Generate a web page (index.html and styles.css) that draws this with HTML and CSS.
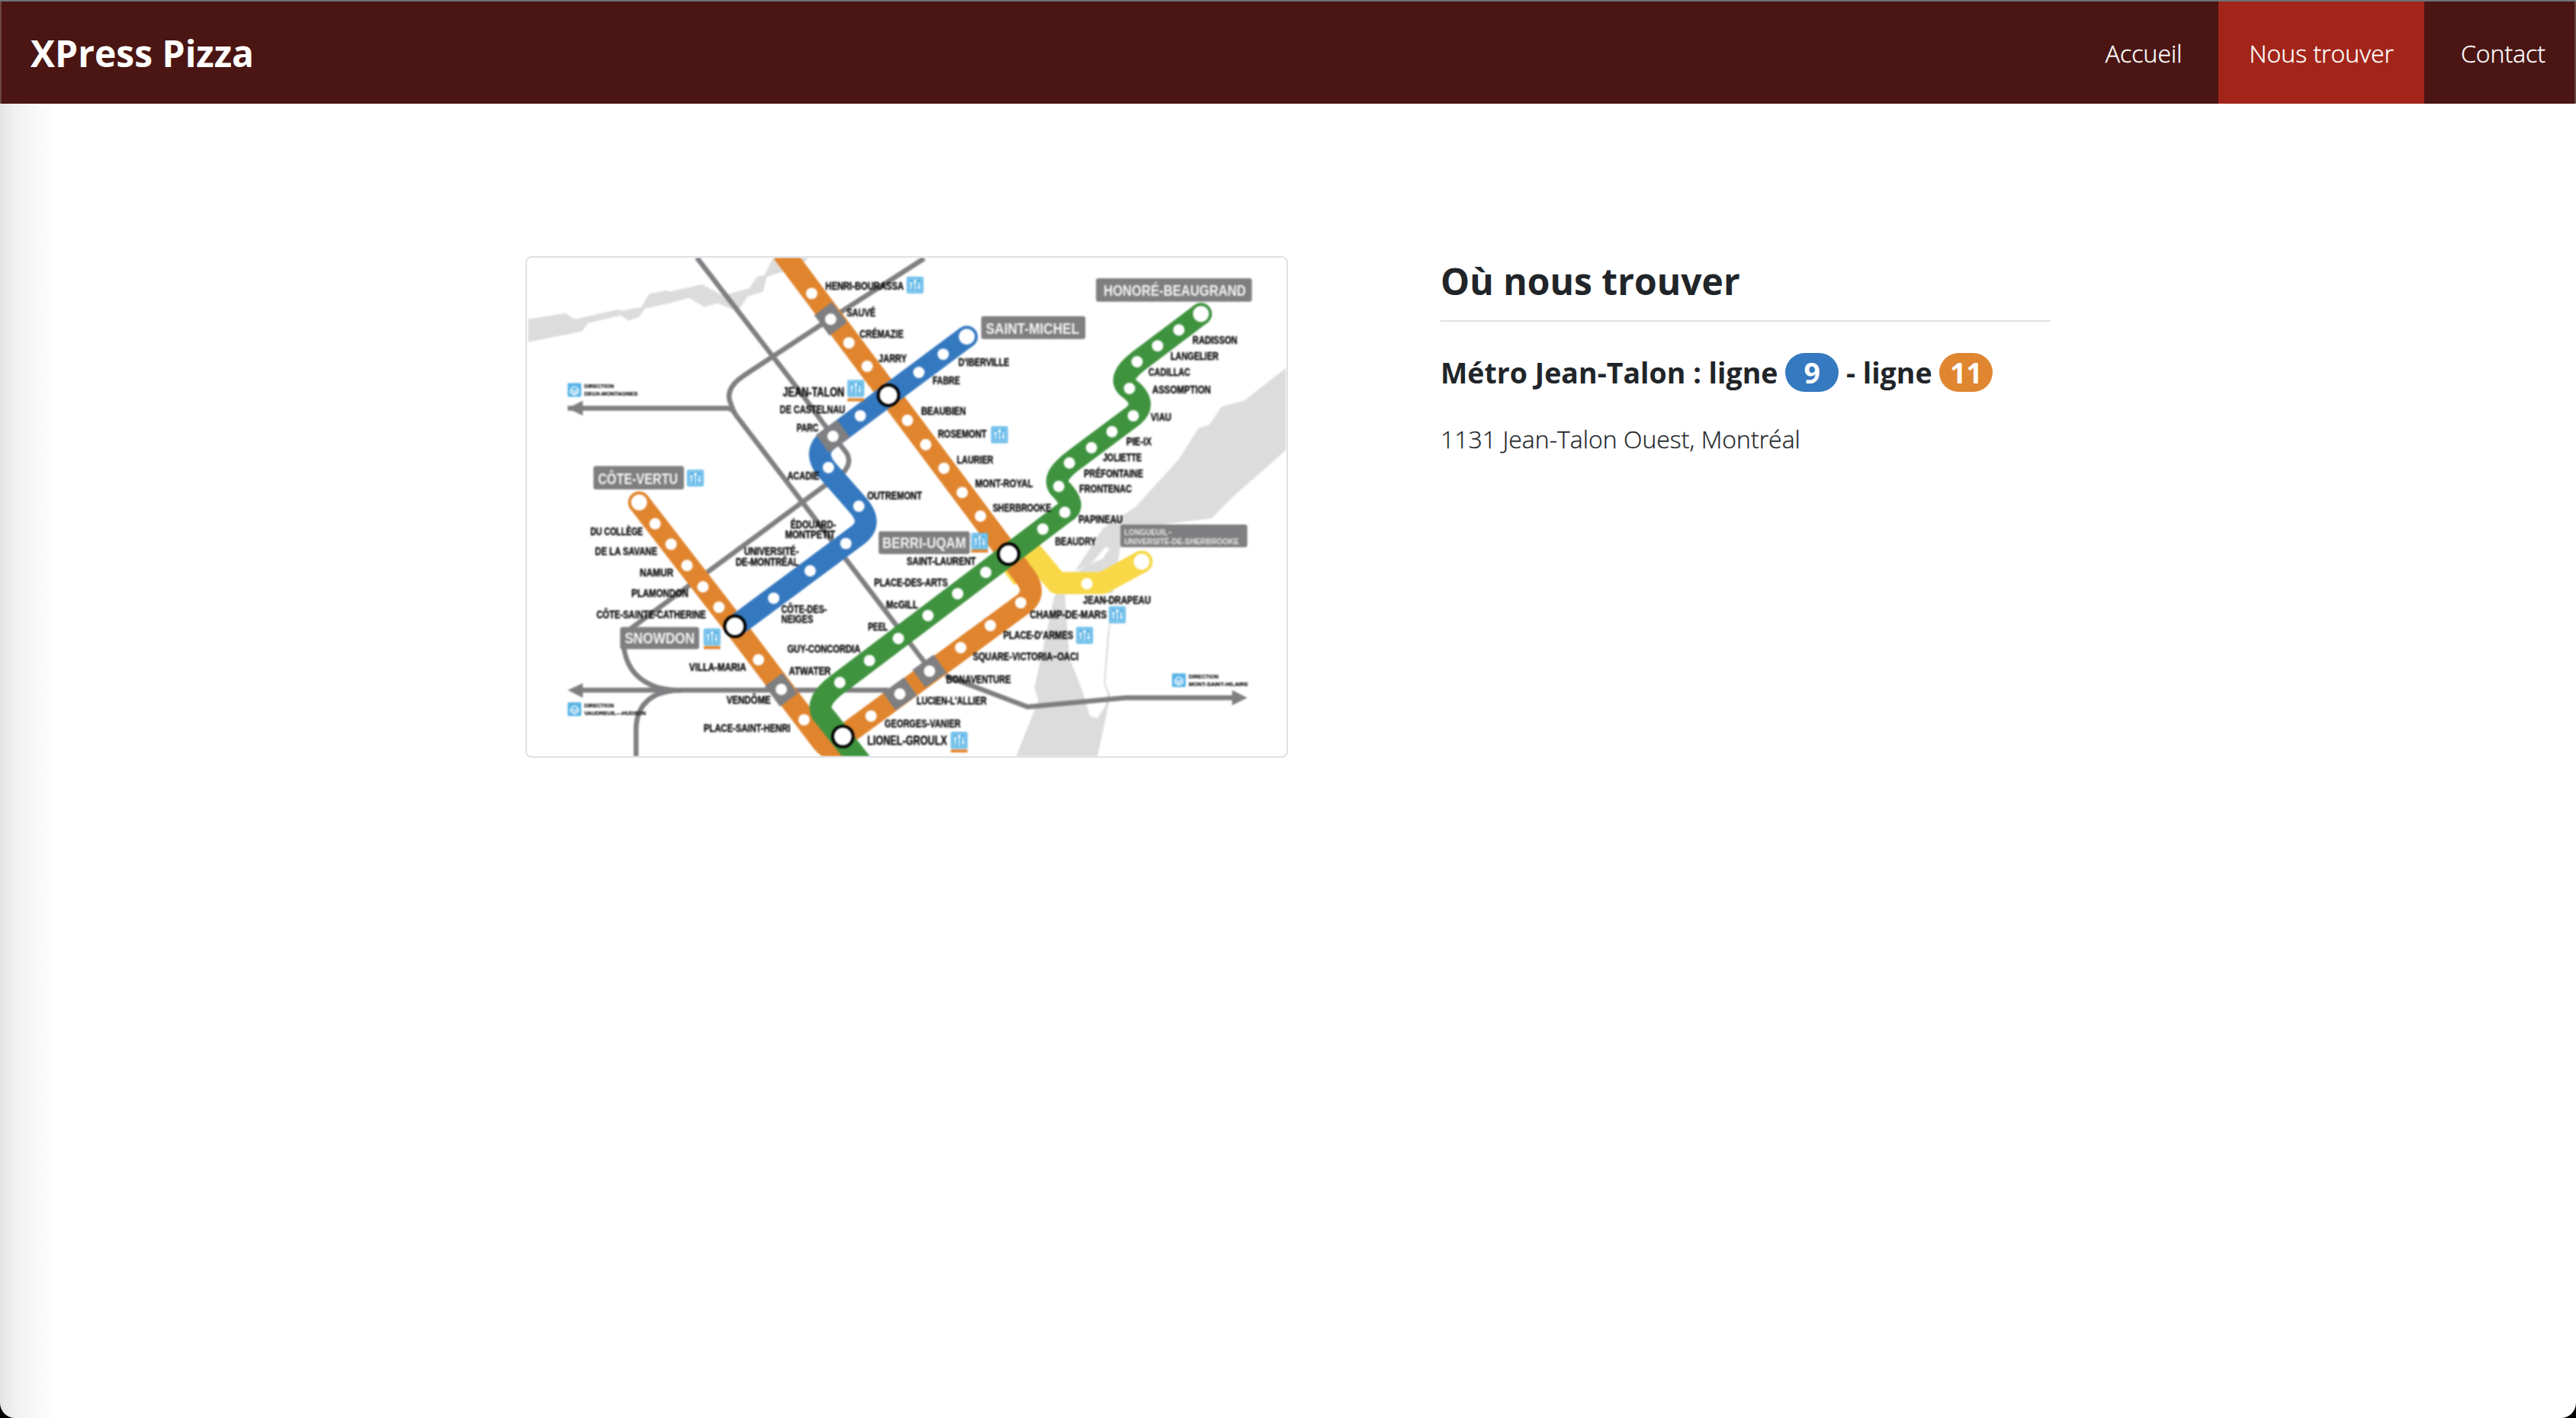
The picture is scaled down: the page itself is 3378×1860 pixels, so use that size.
FILE: index.html
```html
<!DOCTYPE html>
<html lang="fr">
<head>
<meta charset="utf-8">
<title>XPress Pizza</title>
<link rel="stylesheet" href="styles.css">
</head>
<body>
<header class="navbar">
  <a class="brand" href="#">XPress Pizza</a>
  <nav class="menu">
    <a class="menu-link" href="#">Accueil</a>
    <a class="menu-link active" href="#">Nous trouver</a>
    <a class="menu-link" href="#">Contact</a>
  </nav>
</header>
<main class="content">
  <figure class="map-card">
    <svg class="map" viewBox="690 337 998 656" xmlns="http://www.w3.org/2000/svg" role="img" aria-label="Plan du métro de Montréal">
      <defs>
        <g id="lift">
          <rect x="0" y="0" width="22" height="22" rx="2" class="ic-bg"/>
          <rect x="2.5" y="2.5" width="17" height="17" class="ic-in"/>
          <path class="ic-fg" d="M11 8v10M6 7v10M16 7v10"/>
          <circle class="ic-head" cx="11" cy="6" r="2"/>
          <path class="ic-arrow" d="M4 10 6 6 8 10ZM14 13 16 17 18 13Z"/>
        </g>
        <g id="train">
          <rect x="0" y="0" width="18" height="18" rx="1.5" class="ic-bg"/>
          <path class="ic-tr" d="M4 10a5 5 0 0 1 10 0v3H4zM4 10h10M6 15h6"/>
        </g>
      </defs>

      <path class="land" d="M691 418 740 410 752 418 810 405 813 407 840 402 850 385 873 380 877 382 920 372 947 387 982 377 992 362 1002 360 1013 337 1060 337 1050 348 1005 362 1000 382 980 388 970 403 960 405 940 397 923 402 903 390 877 397 845 404 837 415 823 420 813 413 770 423 762 434 691 448Z"/>
      <path class="land" d="M1688 482 1633 525 1603 533 1587 557 1573 561 1547 602 1490 665 1447 693 1410 750 1383 783 1357 903 1362 920 1333 993 1440 993 1457 913 1450 897 1460 783 1470 717 1530 687 1590 680 1620 650 1688 590Z"/>
      <path class="water" d="M1397 780 1403 863 1420 907 1430 940 1440 943 1450 927 1453 910 1448 897 1453 833 1462 778Z"/>
      <path class="water" d="M1412 752 1425 742 1447 733 1456 720 1450 718 1433 738 1410 750Z"/>

      <g class="rail">
        <path d="M913 337 1050 515 1080 556 1110 594Q1117 606 1107 618L830 822Q812 835 818 856 825 890 860 902 875 906 893 906"/>
        <path d="M1212 338 1089 417 975 492Q948 510 958 530 960 538 965 545L1213 870"/>
        <path d="M743 535H953Q958 535 962 540"/>
        <path d="M833 993V958Q833 925 860 912 875 906 893 906"/>
        <path d="M762 906H1165"/>
        <path d="M1240 887 1348 928 1477 916H1620"/>
      </g>
      <path class="head" d="M743 535 763 525V545ZM743 906 763 897V916ZM1637 916 1617 906V926Z"/>

      <path class="yellow" d="M1345 715 1387 765H1447L1498 737"/>
      <path class="yellow-end" d="M1498 737h.01"/>
      <path class="yellow-tip" d="M1323 745l14 18"/>

      <path class="orange" d="M1026 330 1323 727 1345 757Q1362 780 1339 795L1105 967"/>
      <path class="orange" d="M837 659 963 822 1075 970Q1088 988 1105 985"/>
      <path class="orange-end" d="M837 659h.01"/>
      <path class="blue" d="M1268 441 1088 575Q1064 592 1084 616L1126 664Q1146 688 1122 704L963 822"/>
      <path class="blue-end" d="M1268 441h.01"/>
      <path class="green" d="M1576 411 1495 472Q1465 495 1480 508 1507 528 1487 545L1412 601Q1378 625 1390 640 1414 664 1397 672L1101 896Q1063 923 1082 942L1130 1003"/>
      <path class="green-end" d="M1576 411h.01"/>

      <g class="stn-grey">
        <path d="M1079 404 1099 431"/>
        <path d="M1014 892 1034 919"/>
        <path d="M1166 921 1194 901"/>
        <path d="M1205 891 1233 871"/>
        <path d="M1078 582 1106 562"/>
      </g>

      <g class="dots">
        <circle cx="1064" cy="384" r="7.5"/><circle cx="1089" cy="418" r="7.5"/><circle cx="1113" cy="449" r="7.5"/><circle cx="1137" cy="480" r="7.5"/><circle cx="1190" cy="551" r="7.5"/><circle cx="1214" cy="583" r="7.5"/><circle cx="1238" cy="614" r="7.5"/><circle cx="1262" cy="646" r="7.5"/><circle cx="1286" cy="677" r="7.5"/>
        <circle cx="858" cy="687" r="7.5"/><circle cx="879" cy="714" r="7.5"/><circle cx="900" cy="742" r="7.5"/><circle cx="921" cy="770" r="7.5"/><circle cx="942" cy="797" r="7.5"/><circle cx="994" cy="866" r="7.5"/><circle cx="1024" cy="905" r="7.5"/><circle cx="1054" cy="945" r="7.5"/>
        <circle cx="1142" cy="940" r="7.5"/><circle cx="1180" cy="911" r="7.5"/><circle cx="1219" cy="881" r="7.5"/><circle cx="1260" cy="850" r="7.5"/><circle cx="1299" cy="821" r="7.5"/><circle cx="1339" cy="791" r="7.5"/>
        <circle cx="1237" cy="464" r="7.5"/><circle cx="1205" cy="488" r="7.5"/><circle cx="1128" cy="545" r="7.5"/><circle cx="1092" cy="572" r="7.5"/><circle cx="1086" cy="613" r="7.5"/><circle cx="1126" cy="664" r="7.5"/><circle cx="1109" cy="713" r="7.5"/><circle cx="1062" cy="749" r="7.5"/><circle cx="1014" cy="785" r="7.5"/>
        <circle cx="1547" cy="432" r="7.5"/><circle cx="1519" cy="453" r="7.5"/><circle cx="1492" cy="474" r="7.5"/><circle cx="1482" cy="509" r="7.5"/><circle cx="1487" cy="545" r="7.5"/><circle cx="1459" cy="566" r="7.5"/><circle cx="1432" cy="587" r="7.5"/><circle cx="1403" cy="607" r="7.5"/><circle cx="1389" cy="638" r="7.5"/><circle cx="1397" cy="672" r="7.5"/><circle cx="1368" cy="694" r="7.5"/><circle cx="1293" cy="751" r="7.5"/><circle cx="1256" cy="779" r="7.5"/><circle cx="1217" cy="808" r="7.5"/><circle cx="1178" cy="838" r="7.5"/><circle cx="1140" cy="867" r="7.5"/><circle cx="1101" cy="896" r="7.5"/>
        <circle cx="1426" cy="766" r="7.5"/>
        <circle cx="837" cy="659" r="10.5"/><circle cx="1268" cy="441" r="10.5"/><circle cx="1576" cy="411" r="10.5"/><circle cx="1498" cy="737" r="10.5"/>
      </g>
      <g class="hub">
        <circle cx="1165" cy="518" r="13.5"/><circle cx="1323" cy="727" r="13.5"/><circle cx="963" cy="822" r="13.5"/><circle cx="1105" cy="967" r="13.5"/>
      </g>

      <g class="tag">
        <rect x="777" y="611" width="119" height="31" rx="3"/><rect x="1438" y="364" width="205" height="31" rx="3"/><rect x="1287" y="414" width="137" height="30" rx="3"/><rect x="812" y="823" width="104" height="29" rx="3"/><rect x="1152" y="697" width="120" height="30" rx="3"/><rect x="1470" y="688" width="167" height="30" rx="3"/>
      </g>
      <g class="tag-text">
        <text x="783" y="635" textLength="105" lengthAdjust="spacingAndGlyphs">CÔTE-VERTU</text>
        <text x="1448" y="387" textLength="187" lengthAdjust="spacingAndGlyphs">HONORÉ-BEAUGRAND</text>
        <text x="1293" y="437" textLength="123" lengthAdjust="spacingAndGlyphs">SAINT-MICHEL</text>
        <text x="818" y="845" textLength="92" lengthAdjust="spacingAndGlyphs">SNOWDON</text>
        <text x="1157" y="719" textLength="110" lengthAdjust="spacingAndGlyphs">BERRI-UQAM</text>
      </g>
      <g class="tag-small">
        <text x="1475" y="702" textLength="63" lengthAdjust="spacingAndGlyphs">LONGUEUIL–</text>
        <text x="1475" y="714" textLength="151" lengthAdjust="spacingAndGlyphs">UNIVERSITÉ-DE-SHERBROOKE</text>
      </g>

      <g class="names">
        <text x="1082" y="379" textLength="103" lengthAdjust="spacingAndGlyphs">HENRI-BOURASSA</text>
        <text x="1110" y="414" textLength="38" lengthAdjust="spacingAndGlyphs">SAUVÉ</text>
        <text x="1127" y="442" textLength="58" lengthAdjust="spacingAndGlyphs">CRÉMAZIE</text>
        <text x="1152" y="474" textLength="37" lengthAdjust="spacingAndGlyphs">JARRY</text>
        <text x="1022" y="542" textLength="86" lengthAdjust="spacingAndGlyphs">DE CASTELNAU</text>
        <text x="1044" y="566" textLength="29" lengthAdjust="spacingAndGlyphs">PARC</text>
        <text x="1032" y="629" textLength="42" lengthAdjust="spacingAndGlyphs">ACADIE</text>
        <text x="1137" y="655" textLength="72" lengthAdjust="spacingAndGlyphs">OUTREMONT</text>
        <text x="1257" y="479" textLength="67" lengthAdjust="spacingAndGlyphs">D'IBERVILLE</text>
        <text x="1223" y="504" textLength="36" lengthAdjust="spacingAndGlyphs">FABRE</text>
        <text x="1208" y="544" textLength="59" lengthAdjust="spacingAndGlyphs">BEAUBIEN</text>
        <text x="1230" y="574" textLength="64" lengthAdjust="spacingAndGlyphs">ROSEMONT</text>
        <text x="1255" y="608" textLength="48" lengthAdjust="spacingAndGlyphs">LAURIER</text>
        <text x="1279" y="639" textLength="76" lengthAdjust="spacingAndGlyphs">MONT-ROYAL</text>
        <text x="1302" y="671" textLength="77" lengthAdjust="spacingAndGlyphs">SHERBROOKE</text>
        <text x="1565" y="450" textLength="59" lengthAdjust="spacingAndGlyphs">RADISSON</text>
        <text x="1536" y="471" textLength="63" lengthAdjust="spacingAndGlyphs">LANGELIER</text>
        <text x="1507" y="492" textLength="55" lengthAdjust="spacingAndGlyphs">CADILLAC</text>
        <text x="1512" y="516" textLength="77" lengthAdjust="spacingAndGlyphs">ASSOMPTION</text>
        <text x="1510" y="552" textLength="27" lengthAdjust="spacingAndGlyphs">VIAU</text>
        <text x="1478" y="584" textLength="33" lengthAdjust="spacingAndGlyphs">PIE-IX</text>
        <text x="1447" y="605" textLength="51" lengthAdjust="spacingAndGlyphs">JOLIETTE</text>
        <text x="1422" y="626" textLength="78" lengthAdjust="spacingAndGlyphs">PRÉFONTAINE</text>
        <text x="1416" y="646" textLength="69" lengthAdjust="spacingAndGlyphs">FRONTENAC</text>
        <text x="773" y="702" textLength="69" lengthAdjust="spacingAndGlyphs">DU COLLÈGE</text>
        <text x="779" y="728" textLength="82" lengthAdjust="spacingAndGlyphs">DE LA SAVANE</text>
        <text x="838" y="756" textLength="44" lengthAdjust="spacingAndGlyphs">NAMUR</text>
        <text x="827" y="783" textLength="75" lengthAdjust="spacingAndGlyphs">PLAMONDON</text>
        <text x="781" y="811" textLength="144" lengthAdjust="spacingAndGlyphs">CÔTE-SAINTE-CATHERINE</text>
        <text x="903" y="881" textLength="75" lengthAdjust="spacingAndGlyphs">VILLA-MARIA</text>
        <text x="1034" y="886" textLength="55" lengthAdjust="spacingAndGlyphs">ATWATER</text>
        <text x="952" y="924" textLength="58" lengthAdjust="spacingAndGlyphs">VENDÔME</text>
        <text x="922" y="961" textLength="114" lengthAdjust="spacingAndGlyphs">PLACE-SAINT-HENRI</text>
        <text x="1036" y="693" textLength="60" lengthAdjust="spacingAndGlyphs">ÉDOUARD-</text>
        <text x="1029" y="706" textLength="66" lengthAdjust="spacingAndGlyphs">MONTPETIT</text>
        <text x="975" y="728" textLength="72" lengthAdjust="spacingAndGlyphs">UNIVERSITÉ-</text>
        <text x="964" y="742" textLength="83" lengthAdjust="spacingAndGlyphs">DE-MONTRÉAL</text>
        <text x="1024" y="804" textLength="60" lengthAdjust="spacingAndGlyphs">CÔTE-DES-</text>
        <text x="1024" y="817" textLength="42" lengthAdjust="spacingAndGlyphs">NEIGES</text>
        <text x="1138" y="828" textLength="26" lengthAdjust="spacingAndGlyphs">PEEL</text>
        <text x="1032" y="857" textLength="96" lengthAdjust="spacingAndGlyphs">GUY-CONCORDIA</text>
        <text x="1189" y="741" textLength="91" lengthAdjust="spacingAndGlyphs">SAINT-LAURENT</text>
        <text x="1146" y="769" textLength="97" lengthAdjust="spacingAndGlyphs">PLACE-DES-ARTS</text>
        <text x="1162" y="798" textLength="42" lengthAdjust="spacingAndGlyphs">McGILL</text>
        <text x="1415" y="686" textLength="58" lengthAdjust="spacingAndGlyphs">PAPINEAU</text>
        <text x="1384" y="715" textLength="54" lengthAdjust="spacingAndGlyphs">BEAUDRY</text>
        <text x="1421" y="792" textLength="89" lengthAdjust="spacingAndGlyphs">JEAN-DRAPEAU</text>
        <text x="1351" y="811" textLength="101" lengthAdjust="spacingAndGlyphs">CHAMP-DE-MARS</text>
        <text x="1316" y="839" textLength="92" lengthAdjust="spacingAndGlyphs">PLACE-D'ARMES</text>
        <text x="1276" y="867" textLength="139" lengthAdjust="spacingAndGlyphs">SQUARE-VICTORIA–OACI</text>
        <text x="1241" y="897" textLength="85" lengthAdjust="spacingAndGlyphs">BONAVENTURE</text>
        <text x="1202" y="925" textLength="92" lengthAdjust="spacingAndGlyphs">LUCIEN-L'ALLIER</text>
        <text x="1160" y="955" textLength="100" lengthAdjust="spacingAndGlyphs">GEORGES-VANIER</text>
      </g>
      <g class="names-big">
        <text x="1026" y="520" textLength="81" lengthAdjust="spacingAndGlyphs">JEAN-TALON</text>
        <text x="1137" y="978" textLength="105" lengthAdjust="spacingAndGlyphs">LIONEL-GROULX</text>
      </g>
      <g class="names-tiny">
        <text x="765" y="509" textLength="39" lengthAdjust="spacingAndGlyphs">DIRECTION</text>
        <text x="765" y="519" textLength="70" lengthAdjust="spacingAndGlyphs">DEUX-MONTAGNES</text>
        <text x="765" y="929" textLength="39" lengthAdjust="spacingAndGlyphs">DIRECTION</text>
        <text x="765" y="939" textLength="81" lengthAdjust="spacingAndGlyphs">VAUDREUIL—HUDSON</text>
        <text x="1560" y="891" textLength="39" lengthAdjust="spacingAndGlyphs">DIRECTION</text>
        <text x="1560" y="901" textLength="78" lengthAdjust="spacingAndGlyphs">MONT-SAINT-HILAIRE</text>
      </g>

      <use href="#lift" x="1189" y="362"/><use href="#lift" x="1300" y="559"/><use href="#lift" x="1111" y="498"/><use href="#lift" x="900" y="616"/><use href="#lift" x="922" y="825"/><use href="#lift" x="1274" y="699"/><use href="#lift" x="1455" y="796"/><use href="#lift" x="1412" y="823"/><use href="#lift" x="1247" y="961"/>
      <use href="#train" x="743" y="502"/><use href="#train" x="743" y="922"/><use href="#train" x="1538" y="884"/>
      <g class="bars">
        <rect x="1111" y="522" width="22" height="4"/><rect x="922" y="848" width="22" height="4"/><rect x="1274" y="721" width="22" height="4"/><rect x="1247" y="984" width="22" height="4"/>
      </g>
    </svg>
  </figure>
  <section class="info">
    <h1 class="title">Où nous trouver</h1>
    <h2 class="metro">Métro Jean-Talon : ligne <span class="pill pill-blue">9</span> - ligne <span class="pill pill-orange">11</span></h2>
    <p class="address">1131 Jean-Talon Ouest, Montréal</p>
  </section>
</main>
</body>
</html>
```
FILE: styles.css
```css
* { box-sizing: border-box; }

html { background: #000; }

body {
  margin: 0;
  height: 1860px;
  overflow: hidden;
  border-radius: 0 0 20px 20px;
  font-family: "Open Sans", sans-serif;
  color: #212529;
  background: linear-gradient(90deg, #e4e4e4 0, #f1f1f1 20px, #f8f8f8 45px, #fff 74px);
}

.navbar {
  display: flex;
  justify-content: space-between;
  align-items: stretch;
  height: 136px;
  padding: 0 0 0 40px;
  background: #4a1512;
  border-top: 2px solid #6b7279;
  box-shadow: inset 2px 0 0 #6b4543, inset -2px 0 0 #6b4543;
}

.brand {
  align-self: center;
  font-size: 48px;
  font-weight: 700;
  color: #fff;
  text-decoration: none;
}

.menu { display: flex; gap: 8px; }

.menu-link {
  display: flex;
  align-items: center;
  padding: 0 40px;
  font-size: 32px;
  font-weight: 300;
  color: #fff;
  text-decoration: none;
  -webkit-text-stroke: 0.4px #fff;
}

.menu-link.active { background: #a32519; }

.content {
  display: flex;
  justify-content: center;
  gap: 200px;
  padding-top: 200px;
}

.map-card {
  flex: none;
  width: 1000px;
  height: 658px;
  margin: 0;
  border: 2px solid #dee2e6;
  border-radius: 8px;
  background: #fff;
  overflow: hidden;
}

.map {
  display: block;
  width: 996px;
  height: 654px;
  filter: blur(0.9px);
  font-family: "Liberation Sans", sans-serif;
}

.info { flex: none; width: 800px; }

.title {
  margin: 4px 0 0;
  padding: 0 0 22px;
  font-size: 48px;
  font-weight: 700;
  line-height: 1.2;
  border-bottom: 2px solid #dee2e6;
}

.metro {
  margin: 41px 0 0;
  font-size: 37.5px;
  font-weight: 700;
  line-height: 1.35;
}

.pill {
  display: inline-block;
  width: 70px;
  height: 51px;
  border-radius: 26px;
  color: #fff;
  text-align: center;
  line-height: 51px;
}

.pill-blue { background: #3579c0; }
.pill-orange { background: #e08631; }

.address {
  margin: 38px 0 0;
  font-size: 32px;
  font-weight: 300;
  line-height: 1.5;
  -webkit-text-stroke: 0.3px #212529;
}

/* map drawing */
.land { fill: #dcdcdc; }
.water { fill: #fff; }
.rail { fill: none; stroke: #7f7f81; stroke-width: 6.5; }
.head { fill: #7f7f81; }
.orange, .blue, .green, .yellow { fill: none; stroke-width: 29; }
.orange { stroke: #e0852e; }
.blue { stroke: #3478c0; }
.green { stroke: #3f933f; }
.yellow { stroke: #f8d847; stroke-linejoin: round; }
.orange-end, .blue-end, .green-end, .yellow-end { fill: none; stroke-linecap: round; stroke-width: 29; }
.orange-end { stroke: #e0852e; }
.blue-end { stroke: #3478c0; }
.green-end { stroke: #3f933f; }
.yellow-end { stroke: #f8d847; }
.yellow-tip { fill: none; stroke: #f8d847; stroke-width: 16; }
.stn-grey { fill: none; stroke: #7f7f81; stroke-width: 29; }
.dots { fill: #fff; }
.hub { fill: #fff; stroke: #000; stroke-width: 4; }
.tag { fill: #7f7f81; }
.tag-text { fill: #f4f4f4; font-size: 21px; font-weight: 700; }
.tag-small { fill: #e8e8e8; font-size: 11.5px; font-weight: 700; }
.names { fill: #000; stroke: #000; stroke-width: 0.35; font-size: 14px; font-weight: 700; }
.names-big { fill: #000; stroke: #000; stroke-width: 0.35; font-size: 17px; font-weight: 700; }
.names-tiny { fill: #000; stroke: #000; stroke-width: 0.2; font-size: 8px; font-weight: 700; }
.ic-bg { fill: #56b3e6; }
.ic-in { fill: #56b3e6; stroke: #d8effa; stroke-width: .8; }
.ic-fg { fill: none; stroke: #fff; stroke-width: 1.6; }
.ic-head { fill: #fff; }
.ic-arrow { fill: #fff; }
.ic-tr { fill: none; stroke: #fff; stroke-width: 1.4; }
.bars { fill: #e0852e; }
```
